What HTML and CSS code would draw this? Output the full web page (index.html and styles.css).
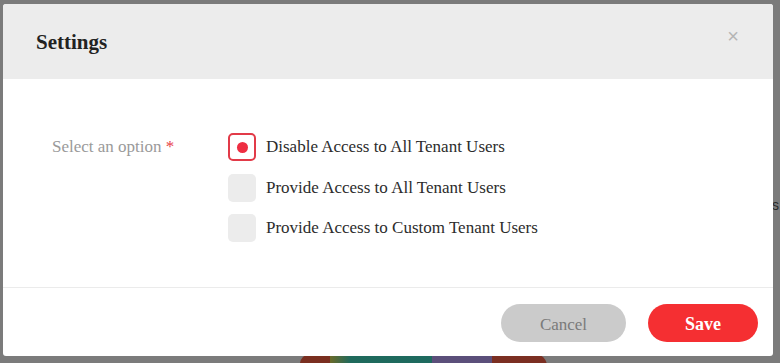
FILE: index.html
```html
<!DOCTYPE html>
<html>
<head>
<meta charset="utf-8">
<title>Settings</title>
<link rel="stylesheet" href="styles.css">
</head>
<body>
<div class="backdrop">
  <div class="behind-text">s</div>
  <div class="chart">
    <span class="slice s1"></span><span class="slice s2"></span><span class="slice s3"></span><span class="slice s4"></span>
  </div>
</div>

<div class="modal">
  <div class="modal-header">
    <h2>Settings</h2>
    <span class="close">&times;</span>
  </div>

  <div class="modal-body">
    <div class="field-label">Select an option <span class="req">*</span></div>
    <div class="options">
      <label class="option checked"><span class="box"><span class="dot"></span></span>Disable Access to All Tenant Users</label>
      <label class="option"><span class="box"></span>Provide Access to All Tenant Users</label>
      <label class="option"><span class="box"></span>Provide Access to Custom Tenant Users</label>
    </div>
  </div>

  <div class="modal-footer">
    <button class="btn cancel">Cancel</button>
    <button class="btn save">Save</button>
  </div>
</div>
</body>
</html>
```

FILE: styles.css
```css
body {
 margin: 0;
 background: #7b7b7b;
 font-family: "Liberation Serif", "Times New Roman", serif;
 width: 780px;
 height: 363px;
 overflow: hidden;
 position: relative;
}

.backdrop { position: absolute; left: 0; top: 0; width: 780px; height: 363px; }
.behind-text { position: absolute; left: 772px; top: 197px; font-family: "Liberation Sans", Arial, sans-serif; font-size: 14px; color: #2a2a2a; }
.chart { position: absolute; left: 300px; top: 354px; height: 9px; display: flex; }
.slice { display: block; height: 20px; }
.s1 { width: 30px; background: #7a2f20; border-radius: 10px 0 0 0; }
.s2 { width: 102px; background: linear-gradient(90deg, #6b6a2a, #1f6a5c 20%, #1e6a5f); }
.s3 { width: 60px; background: #5b4f7a; }
.s4 { width: 55px; margin-left: 0; background: #7b2f22; border-radius: 0 12px 0 0; }

.modal {
 position: absolute;
 left: 3px;
 top: 4px;
 width: 770px;
 height: 352px;
 background: #fff;
 border-radius: 3px;
 overflow: hidden;
 display: flex;
 flex-direction: column;
}

.modal-header {
 height: 75px;
 background: #ececec;
 display: flex;
 align-items: center;
 justify-content: space-between;
 padding: 0 34px 0 33px;
}
.modal-header h2 { margin: 0; font-size: 21px; font-weight: bold; color: #222; position: relative; top: 1px; }
.close { font-family: "Liberation Sans", Arial, sans-serif; font-size: 20px; color: #b5b5b5; position: relative; top: -5px; }

.modal-body {
 flex: 1;
 display: flex;
 padding: 54px 0 0 49px;
}
.field-label { width: 176px; font-size: 17px; color: #9a9a9a; padding-top: 4px; }
.req { color: #e8424a; }

.options { display: flex; flex-direction: column; gap: 12.5px; }
.option { display: flex; align-items: center; font-size: 17px; color: #2c2c2c; height: 28px; }
.box {
 width: 28px; height: 28px;
 box-sizing: border-box;
 border-radius: 5px;
 background: #ececec;
 margin-right: 10px;
 display: flex; align-items: center; justify-content: center;
}
.option.checked .box { background: #fff; border: 2px solid #e23a48; }
.dot { width: 11px; height: 11px; border-radius: 50%; background: #ee2e42; }

.modal-footer {
 height: 68px;
 border-top: 1px solid #ebebeb;
 display: flex;
 justify-content: flex-end;
 align-items: center;
 padding-right: 15px;
 gap: 22px;
}
.btn {
 height: 38px;
 border: none;
 border-radius: 19px;
 font-family: "Liberation Serif", "Times New Roman", serif;
 font-size: 17px;
 margin-top: 2px;
 padding: 3px 0 0;
}
.cancel { width: 125px; background: #cbcbcb; color: #7a7a7a; }
.save { width: 110px; background: #f52f32; color: #fff; font-weight: bold; font-size: 18px; }
```
